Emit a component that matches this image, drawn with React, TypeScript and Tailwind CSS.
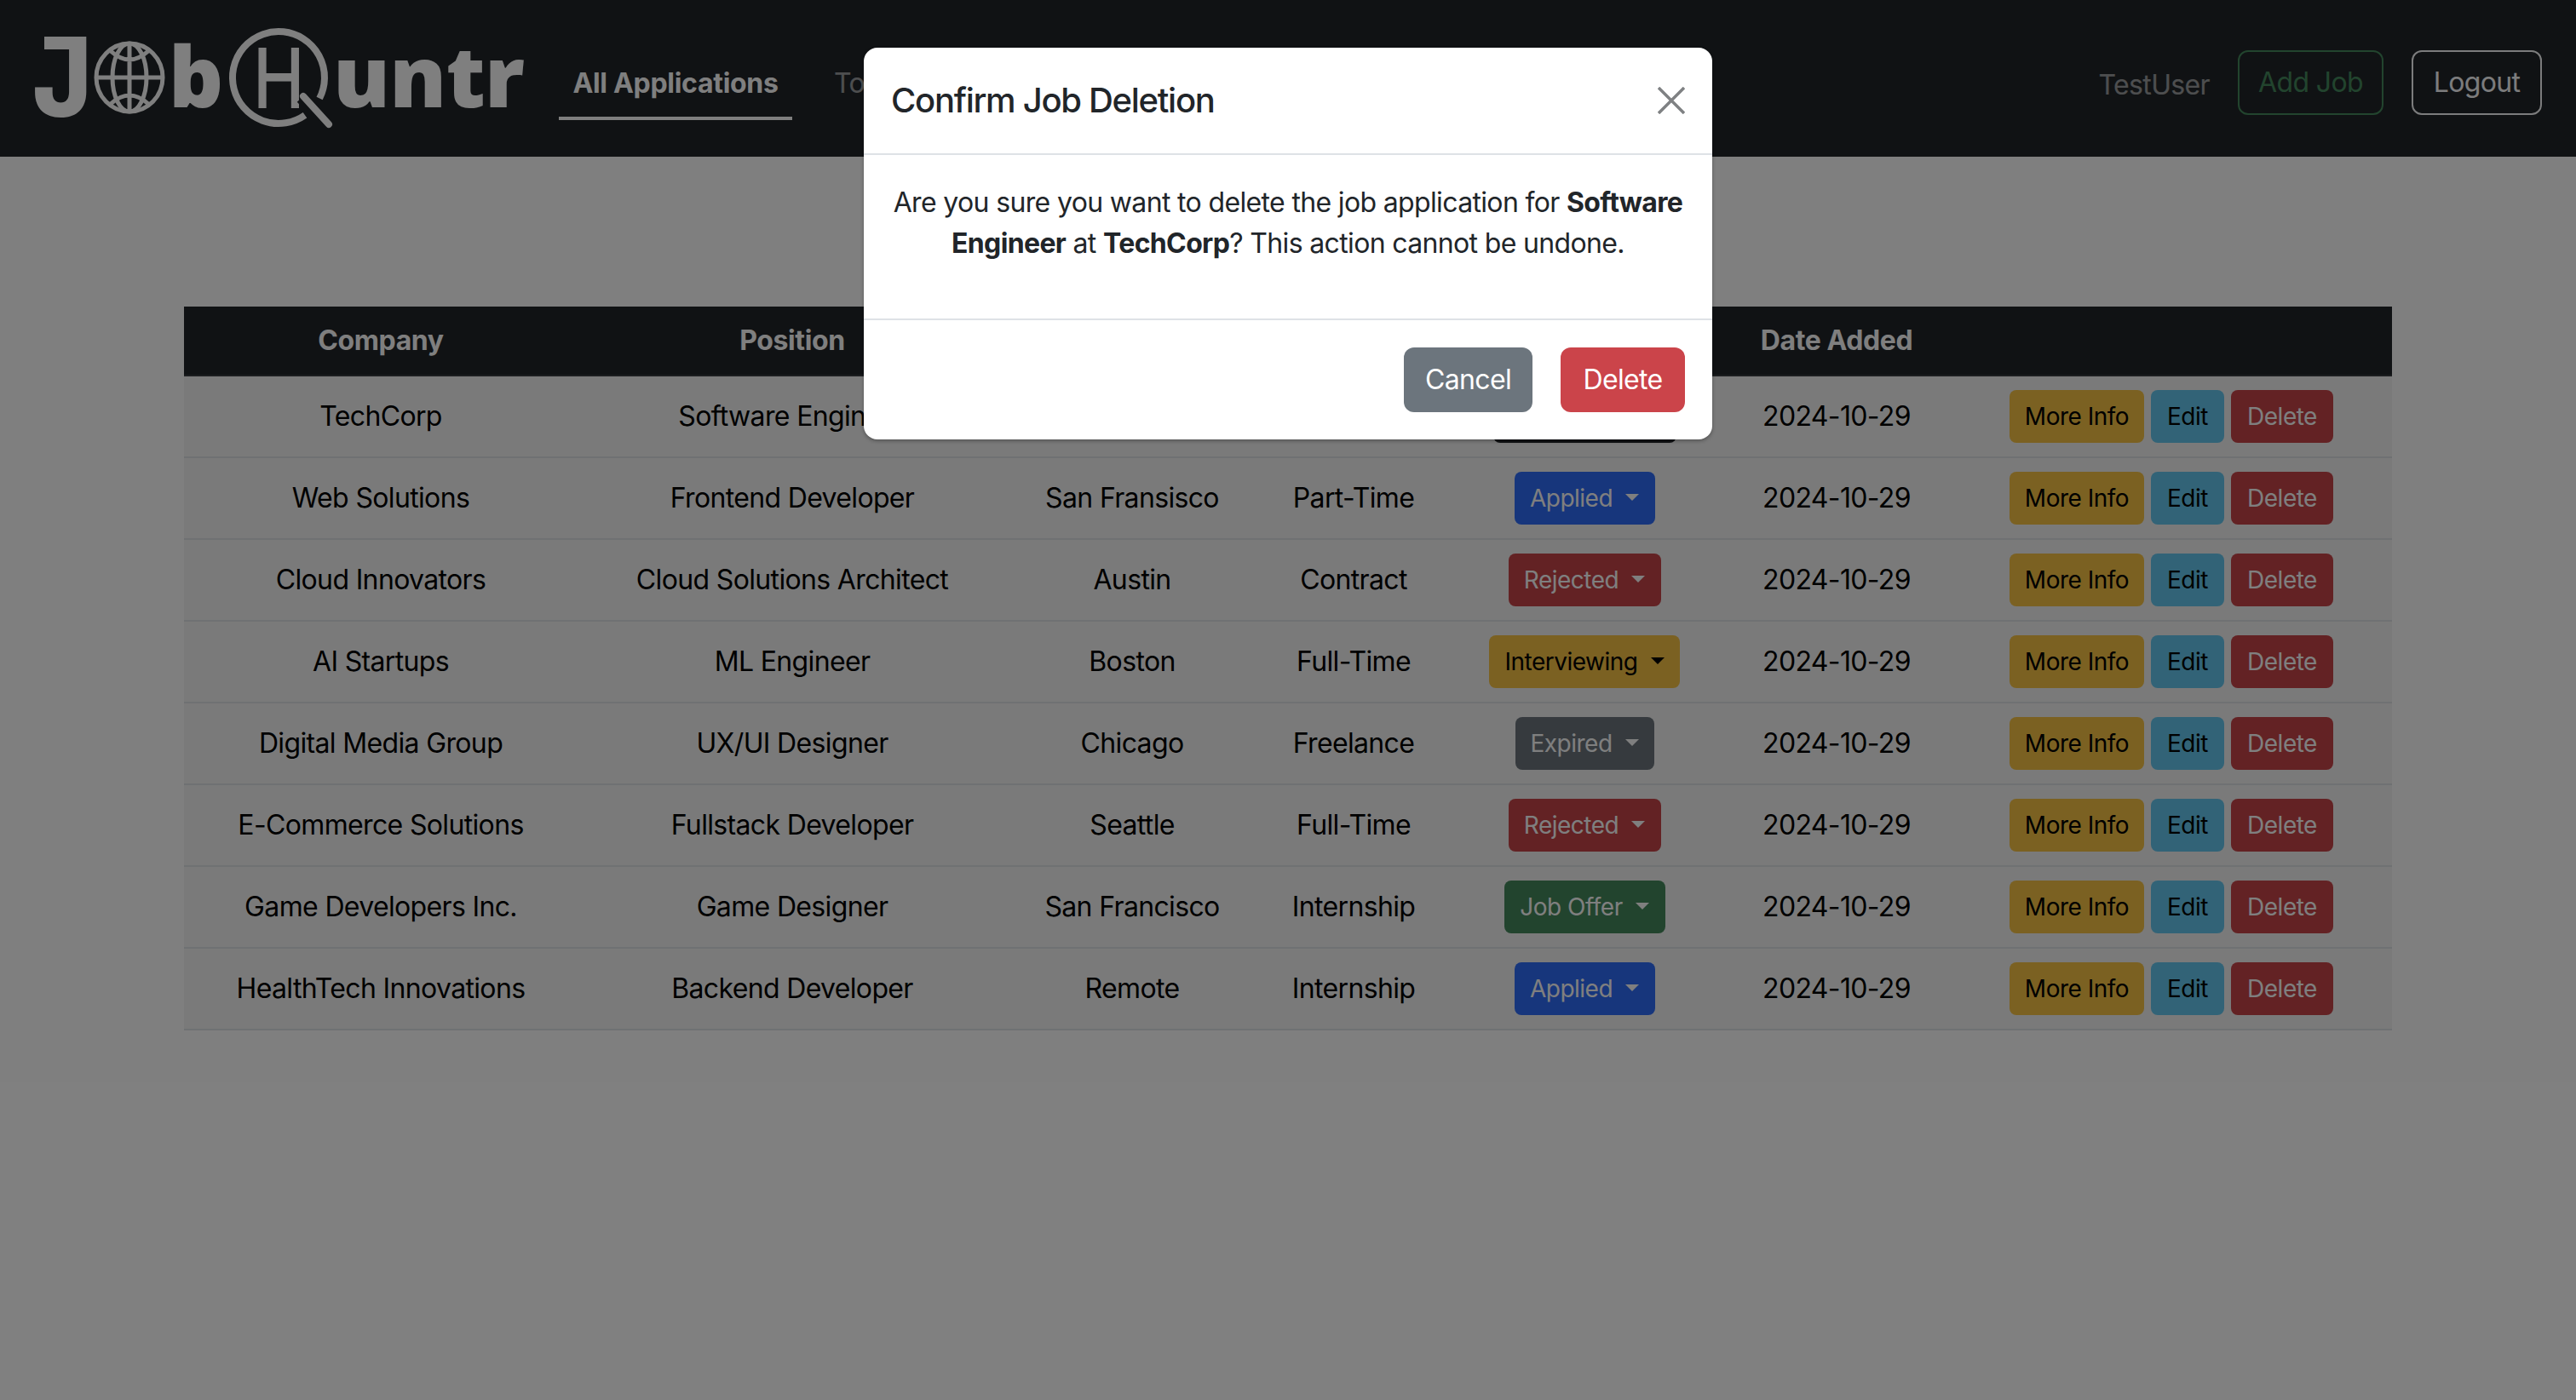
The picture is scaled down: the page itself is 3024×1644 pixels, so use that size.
const jobs = [
  { company: 'TechCorp', position: 'Software Engineer', location: 'New York', type: 'Full-Time', status: 'Not Applied' },
  { company: 'Web Solutions', position: 'Frontend Developer', location: 'San Fransisco', type: 'Part-Time', status: 'Applied' },
  { company: 'Cloud Innovators', position: 'Cloud Solutions Architect', location: 'Austin', type: 'Contract', status: 'Rejected' },
  { company: 'AI Startups', position: 'ML Engineer', location: 'Boston', type: 'Full-Time', status: 'Interviewing' },
  { company: 'Digital Media Group', position: 'UX/UI Designer', location: 'Chicago', type: 'Freelance', status: 'Expired' },
  { company: 'E-Commerce Solutions', position: 'Fullstack Developer', location: 'Seattle', type: 'Full-Time', status: 'Rejected' },
  { company: 'Game Developers Inc.', position: 'Game Designer', location: 'San Francisco', type: 'Internship', status: 'Job Offer' },
  { company: 'HealthTech Innovations', position: 'Backend Developer', location: 'Remote', type: 'Internship', status: 'Applied' },
];

const statusClass: Record<string, string> = {
  'Not Applied': 'w-[215px] bg-[#212529] text-white',
  Interviewing: 'w-[224px] bg-[#f6c244] text-black',
  Applied: 'w-[165px] bg-[#2e6cf8] text-white',
  Rejected: 'w-[179px] bg-[#c64548] text-white',
  Expired: 'w-[163px] bg-[#6c757d] text-white',
  'Job Offer': 'w-[189px] bg-[#44885c] text-white',
};

function Logo() {
  return (
    <svg width="620" height="184" viewBox="0 0 620 184" className="shrink-0">
      <text transform="translate(38 137) scale(0.92 1)" fontSize="129" fill="#fff" className="font-['Inter',sans-serif] font-extrabold">J</text>
      <rect x="52" y="43" width="40" height="15" fill="#fff" />
      <g fill="#fff" className="font-['Open_Sans',sans-serif] font-extrabold">
        <text x="198" y="126" fontSize="100">b</text>
        <text x="391" y="126" fontSize="100">untr</text>
      </g>
      {/* globe */}
      <g fill="none" stroke="#fff" strokeWidth="5">
        <ellipse cx="152" cy="91" rx="39" ry="40" />
        <ellipse cx="152" cy="91" rx="20" ry="40" />
        <path d="M152 51V131M113 91H191M130 60Q152 80 174 60M130 122Q152 102 174 122" />
      </g>
      {/* magnifier with the H */}
      <text x="327" y="127" fontSize="98" textAnchor="middle" textLength="60" lengthAdjust="spacingAndGlyphs" fill="#fff" className="font-['Inter',sans-serif] font-medium">H</text>
      <path d="M356 113L390 149" stroke="#212529" strokeWidth="20" />
      <path d="M358 135.2A54 54 0 1 1 375.1 115.5" fill="none" stroke="#fff" strokeWidth="8" />
      <path d="M356 113L386 146" stroke="#fff" strokeWidth="8" strokeLinecap="round" />
    </svg>
  );
}

function ActionButton({ label, className }: { label: string; className: string }) {
  return (
    <button className={`h-[62px] rounded-lg text-[28px] leading-[42px] tracking-[-0.5px] ${className}`}>
      {label}
    </button>
  );
}

function StatusDropdown({ status }: { status: string }) {
  return (
    <button className={`inline-flex items-center justify-center h-[62px] rounded-lg text-[28px] leading-[42px] tracking-[-0.5px] align-middle ${statusClass[status]}`}>
      {status}
      <span className="ml-[15px] mb-[2px] w-0 h-0 border-x-[8px] border-x-transparent border-t-[8px] border-t-current" />
    </button>
  );
}

export default function App() {
  return (
    <div className="relative min-h-[1644px] bg-white overflow-hidden font-['Inter','Liberation_Sans',sans-serif] text-[32px] leading-[48px] tracking-[-0.65px] text-[#212529]">
      <nav className="flex items-center h-[184px] pr-[40px] bg-[#212529]">
        <Logo />
        <a className="ml-[36px] h-[102px] mt-[-4px] pt-[35px] w-[274px] text-center font-bold tracking-[-0.3px] text-white border-b-[4px] border-white">All Applications</a>
        <a className="ml-[49px] mt-[12px] text-white/55">To Apply</a>
        <span className="ml-auto mr-[33px] mt-[16px] text-white/55">TestUser</span>
        <button className="w-[171px] mt-[10px] h-[76px] rounded-xl border-2 border-[#44885c] text-[#44885c]">Add Job</button>
        <button className="w-[153px] mt-[10px] ml-[33px] h-[76px] rounded-xl border-2 border-[#f8f9fa] text-[#f8f9fa]">Logout</button>
      </nav>

      <main className="px-[216px] pt-[176px]">
        <table className="w-[2592px] table-fixed border-separate border-spacing-0 text-center">
          <colgroup>
            <col className="w-[462px]" />
            <col className="w-[504px]" />
            <col className="w-[294px]" />
            <col className="w-[226px]" />
            <col className="w-[316px]" />
            <col className="w-[276px]" />
            <col className="w-[514px]" />
          </colgroup>
          <thead className="bg-[#212529] text-white [&_th]:h-[82px] [&_th]:font-bold [&_th]:tracking-[-0.4px] [&_th]:border-b-2 [&_th]:border-[#373b3e]">
            <tr>
              <th>Company</th>
              <th>Position</th>
              <th>Location</th>
              <th>Job Type</th>
              <th>Status</th>
              <th>Date Added</th>
              <th />
            </tr>
          </thead>
          <tbody className="bg-[#f5f5f5] text-black [&_td]:h-[96px] [&_td]:border-b-2 [&_td]:border-[#dee2e6]">
            {jobs.map((job) => (
              <tr key={job.company}>
                <td>{job.company}</td>
                <td>{job.position}</td>
                <td>{job.location}</td>
                <td>{job.type}</td>
                <td><StatusDropdown status={job.status} /></td>
                <td>2024-10-29</td>
                <td>
                  <div className="flex justify-center gap-[8px] pr-[4px]">
                    <ActionButton label="More Info" className="w-[158px] bg-[#f6c244] text-black" />
                    <ActionButton label="Edit" className="w-[86px] bg-[#64c6ee] text-black" />
                    <ActionButton label="Delete" className="w-[120px] bg-[#c64548] text-white" />
                  </div>
                </td>
              </tr>
            ))}
          </tbody>
        </table>
      </main>

      {/* backdrop and modal */}
      <div className="absolute inset-0 bg-black/50" />
      <div className="absolute left-[1014px] top-[56px] w-[996px] h-[460px] bg-white rounded-2xl flex flex-col shadow-[0_2px_4px_rgba(0,0,0,0.3)]">
        <div className="flex items-center justify-between h-[126px] px-[32px] border-b-2 border-[#dee2e6]">
          <h5 className="text-[40px] leading-[60px] font-medium tracking-[-1.3px]">Confirm Job Deletion</h5>
          <svg width="32" height="32" viewBox="0 0 32 32">
            <path d="M1 1L31 31M31 1L1 31" stroke="#7f8183" strokeWidth="3.5" />
          </svg>
        </div>
        <div className="h-[192px] px-[30px] pt-[32px] text-center">
          <p>
            Are you sure you want to delete the job application for <strong>Software Engineer</strong> at <strong>TechCorp</strong>? This action cannot be undone.
          </p>
        </div>
        <div className="flex-1 flex items-center justify-end gap-[33px] px-[32px] border-t-2 border-[#dee2e6]">
          <button className="w-[151px] h-[76px] rounded-xl bg-[#6c757d] text-white">Cancel</button>
          <button className="w-[146px] h-[76px] rounded-xl bg-[#cb444a] text-white">Delete</button>
        </div>
      </div>
    </div>
  );
}
